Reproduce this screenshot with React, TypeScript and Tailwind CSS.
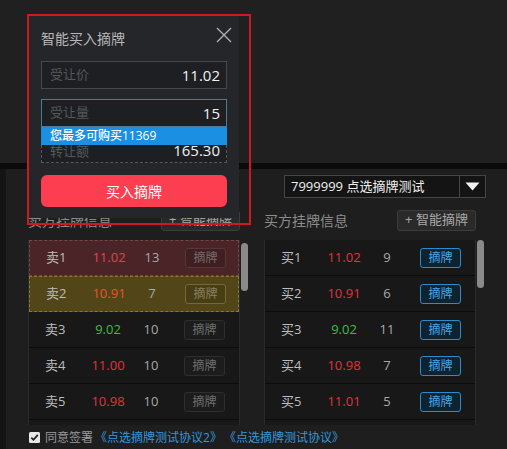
import React from "react";

const FONT = { fontFamily: '"Open Sans", "Noto Sans CJK SC", sans-serif' };

type Row = { l: string; p: string; q: string; c: string; kind?: "red" | "olive" };

const sell: Row[] = [
  { l: "卖1", p: "11.02", q: "13", c: "text-[#e8404a]", kind: "red" },
  { l: "卖2", p: "10.91", q: "7", c: "text-[#f0502a]", kind: "olive" },
  { l: "卖3", p: "9.02", q: "10", c: "text-[#45b84c]" },
  { l: "卖4", p: "11.00", q: "10", c: "text-[#e2323c]" },
  { l: "卖5", p: "10.98", q: "10", c: "text-[#e2323c]" },
];

const buy: Row[] = [
  { l: "买1", p: "11.02", q: "9", c: "text-[#e2323c]" },
  { l: "买2", p: "10.91", q: "6", c: "text-[#e2323c]" },
  { l: "买3", p: "9.02", q: "11", c: "text-[#45b84c]" },
  { l: "买4", p: "10.98", q: "7", c: "text-[#e2323c]" },
  { l: "买5", p: "11.01", q: "5", c: "text-[#e2323c]" },
];

function TableRow({ r, side }: { r: Row; side: "sell" | "buy" }) {
  let rowCls = "border-b border-[#0c0c0c] bg-[#181818]";
  let btnCls = "border-[#2e2e2e] bg-[#1c1c1c] text-[#6f6f6f]";
  if (r.kind === "red") {
    rowCls = "border border-dashed border-[#7a4448] bg-[#4a2427]";
    btnCls = "border-[#5a3538] bg-[#3e1f22] text-[#7a6a6a]";
  } else if (r.kind === "olive") {
    rowCls = "border border-dashed border-[#8a7838] bg-[#524619]";
    btnCls = "border-[#75683a] bg-[#483e16] text-[#8a8060]";
  }
  if (side === "buy") {
    btnCls = "border-[#2b8ccb] bg-[#0f2230] text-[#44a8ec]";
  }
  return (
    <div className={`box-border flex h-[36px] items-center text-[13px] ${rowCls}`}>
      <div className="w-[50px] pl-[16px] text-[#bdbdbd]">{r.l}</div>
      <div className={`w-[58px] text-center ${r.c}`}>{r.p}</div>
      <div className="w-[28px] text-center text-[#a8a8a8]">{r.q}</div>
      <div
        className={`ml-[19px] box-border flex h-[20px] w-[41px] items-center justify-center rounded-[3px] border text-[12px] ${btnCls}`}
      >
        摘牌
      </div>
    </div>
  );
}

function Column({ title, rows, side, barTop }: { title: string; rows: Row[]; side: "sell" | "buy"; barTop: string }) {
  return (
    <div className="flex w-[220px] flex-col">
      <div className="flex h-[24px] w-[212px] items-center justify-between">
        <span className="text-[14px] text-[#8c8c8c]">{title}</span>
        <span className="box-border flex h-[21px] w-[79px] items-center justify-center rounded-[3px] border border-[#3c3c3c] bg-[#2a2a2a] text-[13px] text-[#a8a8a8]">
          + 智能摘牌
        </span>
      </div>
      <div className="mt-[8px] flex">
        <div className="box-border h-[185px] w-[212px] overflow-hidden border-x border-[#2a2a2a] bg-[#181818]">
          {rows.map((r) => (
            <TableRow key={r.l} r={r} side={side} />
          ))}
          <div className="h-[36px] border-b border-[#0c0c0c]" />
        </div>
        <div className={`ml-[1px] h-[48px] w-[7px] rounded-[4px] bg-[#8a8a8a] ${barTop}`} />
      </div>
    </div>
  );
}

export default function App() {
  return (
    <div className="relative h-[449px] w-[507px] overflow-hidden bg-[#202020]" style={FONT}>
      <div className="h-[163px] bg-[#202020]" />
      <div className="h-[6px] bg-[#0b0b0b]" />
      <div className="flex h-[280px]">
        <div className="w-[6px] bg-[#141414]" />
        <div className="flex-1 bg-[#1e1e1e] pl-[22px] pt-[6px]">
          <div className="ml-[256px] box-border flex h-[23px] w-[202px] items-center border border-[#454545] bg-[#141414]">
            <span className="flex-1 pl-[6px] text-[13px] text-[#f0f0f0]">7999999 点选摘牌测试</span>
            <span className="flex h-full w-[26px] items-center justify-center border-l border-[#454545]">
              <svg width="15" height="9" viewBox="0 0 15 9">
                <path d="M0.5 0.5 L14.5 0.5 L7.5 8.5 Z" fill="#f2f2f2" />
              </svg>
            </span>
          </div>
          <div className="mt-[10px] flex gap-[16px]">
            <Column title="卖方挂牌信息" rows={sell} side="sell" barTop="mt-[3px]" />
            <Column title="买方挂牌信息" rows={buy} side="buy" barTop="mt-0" />
          </div>
          <div className="mt-[4px] flex h-[17px] items-center">
            <svg width="11" height="11" viewBox="0 0 11 11" className="ml-[1px]">
              <rect x="0" y="0" width="11" height="11" rx="1.5" fill="#e8e8e8" />
              <path d="M2.3 5.6 L4.5 7.8 L8.8 2.8" stroke="#222" strokeWidth="1.8" fill="none" />
            </svg>
            <span className="ml-[5px] text-[12px] text-[#9a9a9a]">同意签署</span>
            <span className="ml-[2px] text-[12px] text-[#3596dc]">《点选摘牌测试协议2》</span>
            <span className="ml-[2px] text-[12px] text-[#3596dc]">《点选摘牌测试协议》</span>
          </div>
        </div>
      </div>

      {/* modal */}
      <div className="absolute left-[29px] top-[16px] box-border flex h-[202px] w-[210px] flex-col bg-[#25262a] px-[12px]">
        <div className="relative mt-[12px] flex h-[20px] items-center">
          <span className="text-[14px] text-[#b8b8b8]">智能买入摘牌</span>
          <svg width="16" height="16" viewBox="0 0 16 16" className="absolute right-[-5px] top-[-1px]">
            <path d="M1 1 L15 15 M15 1 L1 15" stroke="#b0b0b0" strokeWidth="1.4" />
          </svg>
        </div>
        <div className="mt-[13px] box-border flex h-[28px] items-center justify-between border border-[#46484c] bg-[#1e1f22] pl-[8px] pr-[6px]">
          <span className="text-[13px] text-[#55585d]">受让价</span>
          <span className="text-[15px] text-[#f0f0f0]">11.02</span>
        </div>
        <div className="mt-[10px] box-border flex h-[28px] items-center justify-between border border-[#4d7896] bg-[#1e1f22] pl-[8px] pr-[6px]">
          <span className="text-[13px] text-[#55585d]">受让量</span>
          <span className="text-[15px] text-[#f0f0f0]">15</span>
        </div>
        <div className="relative">
          <div className="mt-[8px] box-border flex h-[28px] items-end justify-between border border-dashed border-[#55575b] bg-[#1e1f22] pb-[2px] pl-[8px] pr-[6px]">
            <span className="text-[13px] leading-[18px] text-[#55585d]">转让额</span>
            <span className="text-[15px] leading-[20px] text-[#f0f0f0]">165.30</span>
          </div>
          <div className="absolute left-0 right-0 top-0 flex h-[18px] items-center bg-[#1b8fe2] pl-[9px] text-[12px] font-medium text-white">
            您最多可购买11369
          </div>
        </div>
        <div className="mt-[12px] flex h-[32px] items-center justify-center rounded-[6px] bg-[#fd3e50] text-[14px] text-white">
          买入摘牌
        </div>
      </div>
      {/* annotation outline */}
      <div className="pointer-events-none absolute left-[27px] top-[14px] h-[211px] w-[224px] border-2 border-[#cc1a22]" />
    </div>
  );
}
